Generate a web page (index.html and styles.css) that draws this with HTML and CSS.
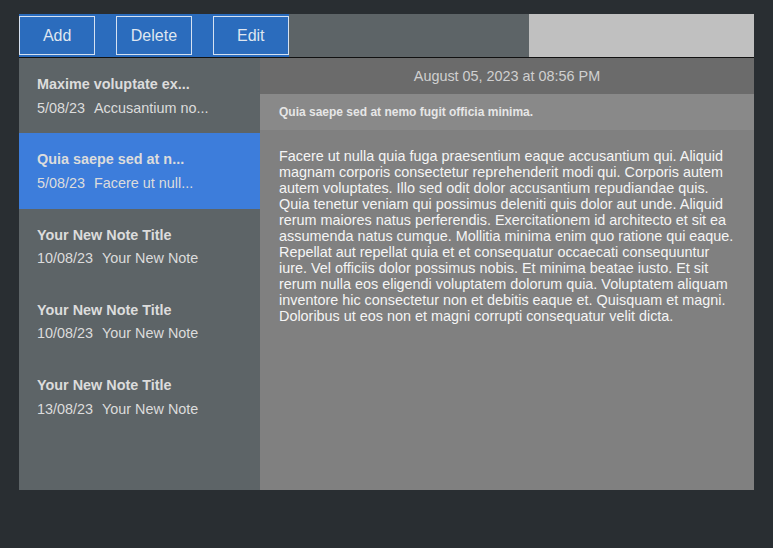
FILE: index.html
```html
<!DOCTYPE html>
<html>
<head>
<meta charset="utf-8">
<link rel="stylesheet" href="styles.css">
</head>
<body>
<div class="app">
  <div class="toolbar">
    <div class="actions">
      <button class="btn">Add</button>
      <button class="btn">Delete</button>
      <button class="btn">Edit</button>
    </div>
    <div class="spacer"></div>
    <div class="search"></div>
  </div>
  <div class="main">
    <div class="sidebar">
      <div class="note">
        <div class="note-title">Maxime voluptate ex...</div>
        <div class="note-meta"><span class="date">5/08/23</span>Accusantium no...</div>
      </div>
      <div class="note selected">
        <div class="note-title">Quia saepe sed at n...</div>
        <div class="note-meta"><span class="date">5/08/23</span>Facere ut null...</div>
      </div>
      <div class="note">
        <div class="note-title">Your New Note Title</div>
        <div class="note-meta"><span class="date">10/08/23</span>Your New Note</div>
      </div>
      <div class="note">
        <div class="note-title">Your New Note Title</div>
        <div class="note-meta"><span class="date">10/08/23</span>Your New Note</div>
      </div>
      <div class="note">
        <div class="note-title">Your New Note Title</div>
        <div class="note-meta"><span class="date">13/08/23</span>Your New Note</div>
      </div>
    </div>
    <div class="content">
      <div class="timestamp">August 05, 2023 at 08:56 PM</div>
      <div class="title">Quia saepe sed at nemo fugit officia minima.</div>
      <div class="body">Facere ut nulla quia fuga praesentium eaque accusantium qui. Aliquid magnam corporis consectetur reprehenderit modi qui. Corporis autem autem voluptates. Illo sed odit dolor accusantium repudiandae quis. Quia tenetur veniam qui possimus deleniti quis dolor aut unde. Aliquid rerum maiores natus perferendis. Exercitationem id architecto et sit ea assumenda natus cumque. Mollitia minima enim quo ratione qui eaque. Repellat aut repellat quia et et consequatur occaecati consequuntur iure. Vel officiis dolor possimus nobis. Et minima beatae iusto. Et sit rerum nulla eos eligendi voluptatem dolorum quia. Voluptatem aliquam inventore hic consectetur non et debitis eaque et. Quisquam et magni. Doloribus ut eos non et magni corrupti consequatur velit dicta.</div>
    </div>
  </div>
</div>
</body>
</html>
```
FILE: styles.css
```css
html, body {
  margin: 0;
  padding: 0;
  background: #292e32;
  font-family: "Liberation Sans", Arial, sans-serif;
}
.app {
  margin: 14px 0 0 19px;
  width: 735px;
  height: 476px;
  display: flex;
  flex-direction: column;
}
.toolbar {
  display: flex;
  height: 43px;
  border-bottom: 1px solid #111;
  flex-shrink: 0;
}
.actions {
  background: #2b6cbd;
  display: flex;
  gap: 20.5px;
  padding: 2px 0;
  width: 270px;
  box-sizing: border-box;
}
.btn {
  width: 76.3px;
  height: 39px;
  margin: 0;
  background: #2b6cbd;
  border: 1px solid #d6e2f2;
  color: #dfe6f0;
  font-family: "Liberation Sans", Arial, sans-serif;
  font-size: 16px;
  padding: 0;
}
.spacer {
  background: #5d6467;
  width: 240px;
}
.search {
  background: #c0c0c0;
  flex: 1;
}
.main {
  display: flex;
  flex: 1;
  min-height: 0;
}
.sidebar {
  width: 241px;
  background: #5d6467;
  display: flex;
  flex-direction: column;
}
.note {
  height: 75.3px;
  flex-shrink: 0;
  padding: 18px 0 0 18px;
  box-sizing: border-box;
  color: #dcdcdc;
}
.note.selected {
  background: #3d7ddb;
}
.note-title {
  font-weight: bold;
  font-size: 14.4px;
  line-height: 16px;
}
.note-meta {
  font-size: 14.4px;
  line-height: 16px;
  margin-top: 7.5px;
}
.date {
  margin-right: 9px;
}
.content {
  flex: 1;
  background: #808080;
  display: flex;
  flex-direction: column;
}
.timestamp {
  height: 36px;
  background: #6b6b6b;
  color: #d0d0d0;
  font-size: 14.4px;
  display: flex;
  align-items: center;
  justify-content: center;
}
.title {
  height: 36px;
  background: #898989;
  color: #e6e6e6;
  font-size: 12px;
  font-weight: bold;
  display: flex;
  align-items: center;
  padding-left: 19px;
}
.body {
  padding: 18px 19px 0 19px;
  color: #f5f5f5;
  font-size: 14.4px;
  line-height: 16px;
}
```
